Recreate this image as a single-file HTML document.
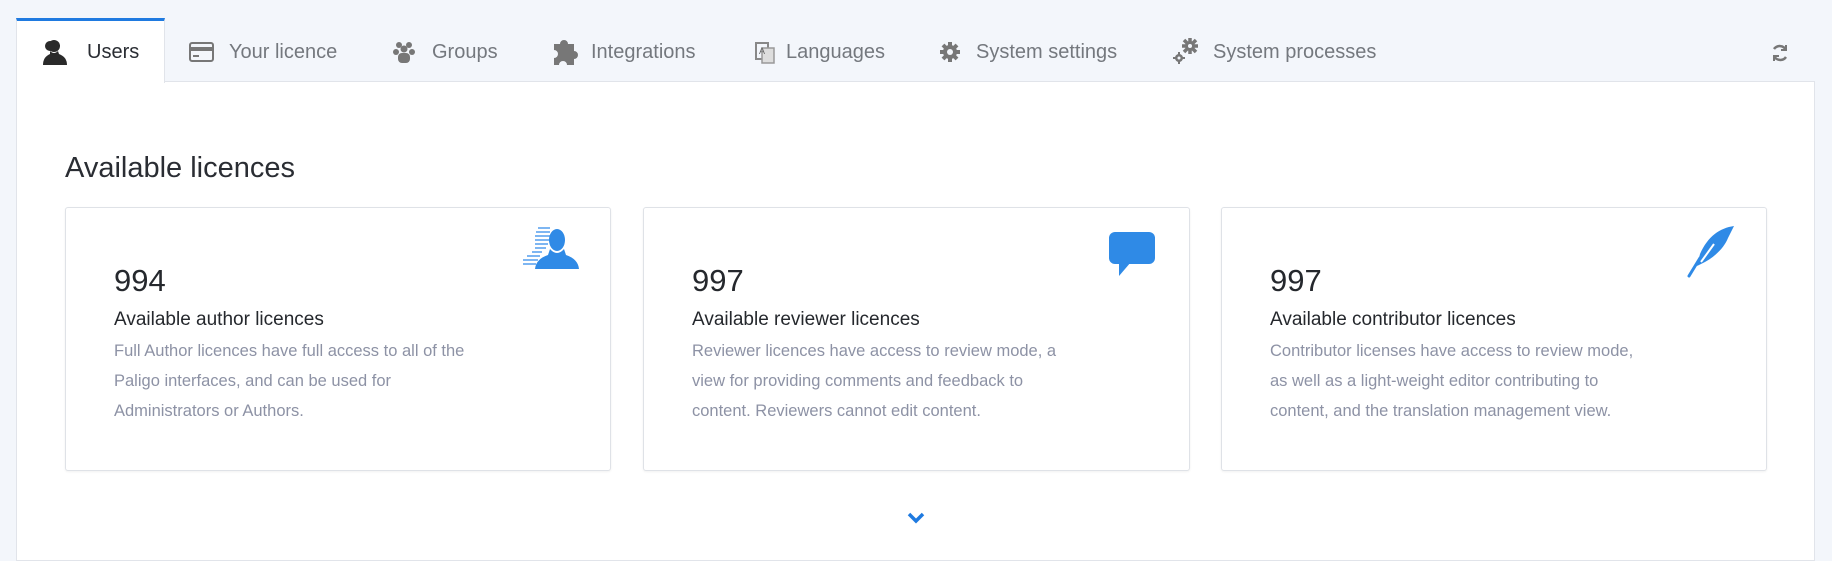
<!DOCTYPE html>
<html><head><meta charset="utf-8"><style>
*{margin:0;padding:0;box-sizing:border-box}
body{width:1832px;height:548px;background:#f3f6fb;font-family:"Liberation Sans",sans-serif;position:relative;overflow:hidden}
.content{position:absolute;left:16px;top:81px;width:1799px;height:480px;background:#fff;border:1px solid #e1e4ea}
.tabact{position:absolute;left:16px;top:18px;width:149px;height:65px;background:#fff;border-top:3px solid #1f7ae0;border-left:1px solid #e1e4ea;border-right:1px solid #e1e4ea}
.tab{position:absolute;top:41px;font-size:20px;color:#74787e;white-space:nowrap}
.ico{position:absolute}
h2{position:absolute;left:65px;top:152px;font-size:29px;font-weight:normal;color:#2a2d33}
.card{position:absolute;top:207px;height:264px;background:#fff;border:1px solid #dfe2e7;border-radius:3px;box-shadow:0 1px 2px rgba(0,0,0,.06)}
.num{position:absolute;left:48px;top:55px;font-size:31px;color:#25282d}
.ttl{position:absolute;left:48px;top:101px;font-size:19px;color:#25282d;white-space:nowrap}
.desc{position:absolute;left:48px;top:128px;font-size:16.5px;line-height:30px;color:#8d92a5;white-space:nowrap}
</style></head><body>
<div class="content"></div>
<div class="tabact"></div>
<svg class="ico" style="left:41px;top:38px" width="28" height="28" viewBox="0 0 28 28"><circle cx="13" cy="8" r="6" fill="#2a2a2a"/><path d="M9 13 Q13 17 17 13 L18 16 Q26 19 26 27 L2 27 Q2 19 9 16Z" fill="#2a2a2a"/><circle cx="9" cy="8" r="5" fill="#2a2a2a"/></svg>
<div class="tab" style="left:87px;color:#2a2d33">Users</div>
<svg class="ico" style="left:189px;top:42px" width="25" height="20" viewBox="0 0 25 20"><rect x="1" y="1" width="23" height="18" rx="2" fill="none" stroke="#777" stroke-width="2"/><rect x="1" y="5" width="23" height="4" fill="#777"/><rect x="4" y="13" width="6" height="2" fill="#777"/></svg>
<div class="tab" style="left:229px">Your licence</div>
<svg class="ico" style="left:392px;top:40px" width="24" height="24" viewBox="0 0 24 24" fill="#777"><circle cx="7" cy="5" r="3"/><circle cx="17" cy="5" r="3"/><circle cx="12" cy="9" r="3.5"/><circle cx="4" cy="12" r="3"/><circle cx="20" cy="12" r="3"/><rect x="6" y="13" width="12" height="10" rx="4"/></svg>
<div class="tab" style="left:432px">Groups</div>
<svg class="ico" style="left:552px;top:38px" width="26" height="28" viewBox="0 0 26 28" fill="#777"><path d="M2 6h6a4 4 0 1 1 8 0h6v7a4 4 0 1 1 0 8v6h-7a4 4 0 1 0-8 0H2v-7a4 4 0 1 0 0-8Z"/></svg>
<div class="tab" style="left:591px">Integrations</div>
<svg class="ico" style="left:754px;top:40px" width="22" height="24" viewBox="0 0 22 24"><rect x="2" y="3" width="12" height="16" fill="none" stroke="#888" stroke-width="2"/><rect x="8" y="8" width="12" height="15" fill="#ddd" stroke="#999" stroke-width="1.5"/><text x="5" y="14" font-size="9" fill="#666" font-family="Liberation Sans">A</text></svg>
<div class="tab" style="left:786px">Languages</div>
<svg class="ico" style="left:939px;top:41px" width="22" height="22" viewBox="0 0 22 22"><circle cx="11" cy="11" r="7" fill="#777"/><g stroke="#777" stroke-width="4"><line x1="11" y1="1" x2="11" y2="21"/><line x1="1" y1="11" x2="21" y2="11"/><line x1="4" y1="4" x2="18" y2="18"/><line x1="18" y1="4" x2="4" y2="18"/></g><circle cx="11" cy="11" r="3" fill="#f3f6fb"/></svg>
<div class="tab" style="left:976px">System settings</div>
<svg class="ico" style="left:1173px;top:36px" width="28" height="28" viewBox="0 0 28 28"><g stroke="#777" stroke-width="3.5"><line x1="17" y1="2" x2="17" y2="18"/><line x1="9" y1="10" x2="25" y2="10"/><line x1="11" y1="4" x2="23" y2="16"/><line x1="23" y1="4" x2="11" y2="16"/></g><circle cx="17" cy="10" r="5" fill="#777"/><circle cx="17" cy="10" r="2" fill="#f3f6fb"/><circle cx="6" cy="22" r="4" fill="#777"/><g stroke="#777" stroke-width="2"><line x1="6" y1="16" x2="6" y2="28"/><line x1="0" y1="22" x2="12" y2="22"/></g><circle cx="6" cy="22" r="1.5" fill="#f3f6fb"/></svg>
<div class="tab" style="left:1213px">System processes</div>
<svg class="ico" style="left:1770px;top:43px" width="20" height="20" viewBox="0 0 20 20" fill="none" stroke="#777" stroke-width="2.5"><path d="M16 7A7 7 0 0 0 4 6"/><path d="M4 13a7 7 0 0 0 12 1"/><path d="M16 2v5h-5" stroke-width="2"/><path d="M4 18v-5h5" stroke-width="2"/></svg>

<h2>Available licences</h2>

<div class="card" style="left:65px;width:546px">
<svg class="ico" style="left:456px;top:17px" width="58" height="52" viewBox="0 0 58 52"><g stroke="#5ea3ee" stroke-width="1.6"><line x1="16" y1="3" x2="28" y2="3"/><line x1="14" y1="7" x2="28" y2="7"/><line x1="13" y1="11" x2="28" y2="11"/><line x1="13" y1="15" x2="27" y2="15"/><line x1="13" y1="19" x2="26" y2="19"/><line x1="13" y1="23" x2="24" y2="23"/><line x1="10" y1="27" x2="20" y2="27"/><line x1="5" y1="31" x2="18" y2="31"/><line x1="1" y1="35" x2="16" y2="35"/><line x1="1" y1="39" x2="14" y2="39"/></g><ellipse cx="35" cy="15" rx="8" ry="11" fill="#2f8ae6"/><path d="M28 24 Q35 32 42 24 L44 30 Q56 34 57 44 L13 44 Q14 34 26 30Z" fill="#2f8ae6"/></svg>
<div class="num">994</div>
<div class="ttl">Available author licences</div>
<div class="desc">Full Author licences have full access to all of the<br>Paligo interfaces, and can be used for<br>Administrators or Authors.</div>
</div>

<div class="card" style="left:643px;width:547px">
<svg class="ico" style="left:465px;top:24px" width="46" height="46" viewBox="0 0 46 46"><rect x="0" y="0" width="46" height="32" rx="6" fill="#2f8ae6"/><path d="M10 30 L10 44 L22 30Z" fill="#2f8ae6"/></svg>
<div class="num">997</div>
<div class="ttl">Available reviewer licences</div>
<div class="desc">Reviewer licences have access to review mode, a<br>view for providing comments and feedback to<br>content. Reviewers cannot edit content.</div>
</div>

<div class="card" style="left:1221px;width:546px">
<svg class="ico" style="left:462px;top:16px" width="52" height="54" viewBox="0 0 52 54"><path d="M50 2 C36 4 24 12 16 30 L13 42 L17 40 C30 34 40 24 44 14 Z" fill="#2f8ae6"/><path d="M17 38 L30 20" stroke="#fff" stroke-width="2"/><path d="M16 34 L5 52" stroke="#2f8ae6" stroke-width="3" stroke-linecap="round"/></svg>
<div class="num">997</div>
<div class="ttl">Available contributor licences</div>
<div class="desc">Contributor licenses have access to review mode,<br>as well as a light-weight editor contributing to<br>content, and the translation management view.</div>
</div>

<svg class="ico" style="left:907px;top:512px" width="18" height="12" viewBox="0 0 18 12"><path d="M2 2 L9 9 L16 2" fill="none" stroke="#1f7ae0" stroke-width="3.5"/></svg>
</body></html>
